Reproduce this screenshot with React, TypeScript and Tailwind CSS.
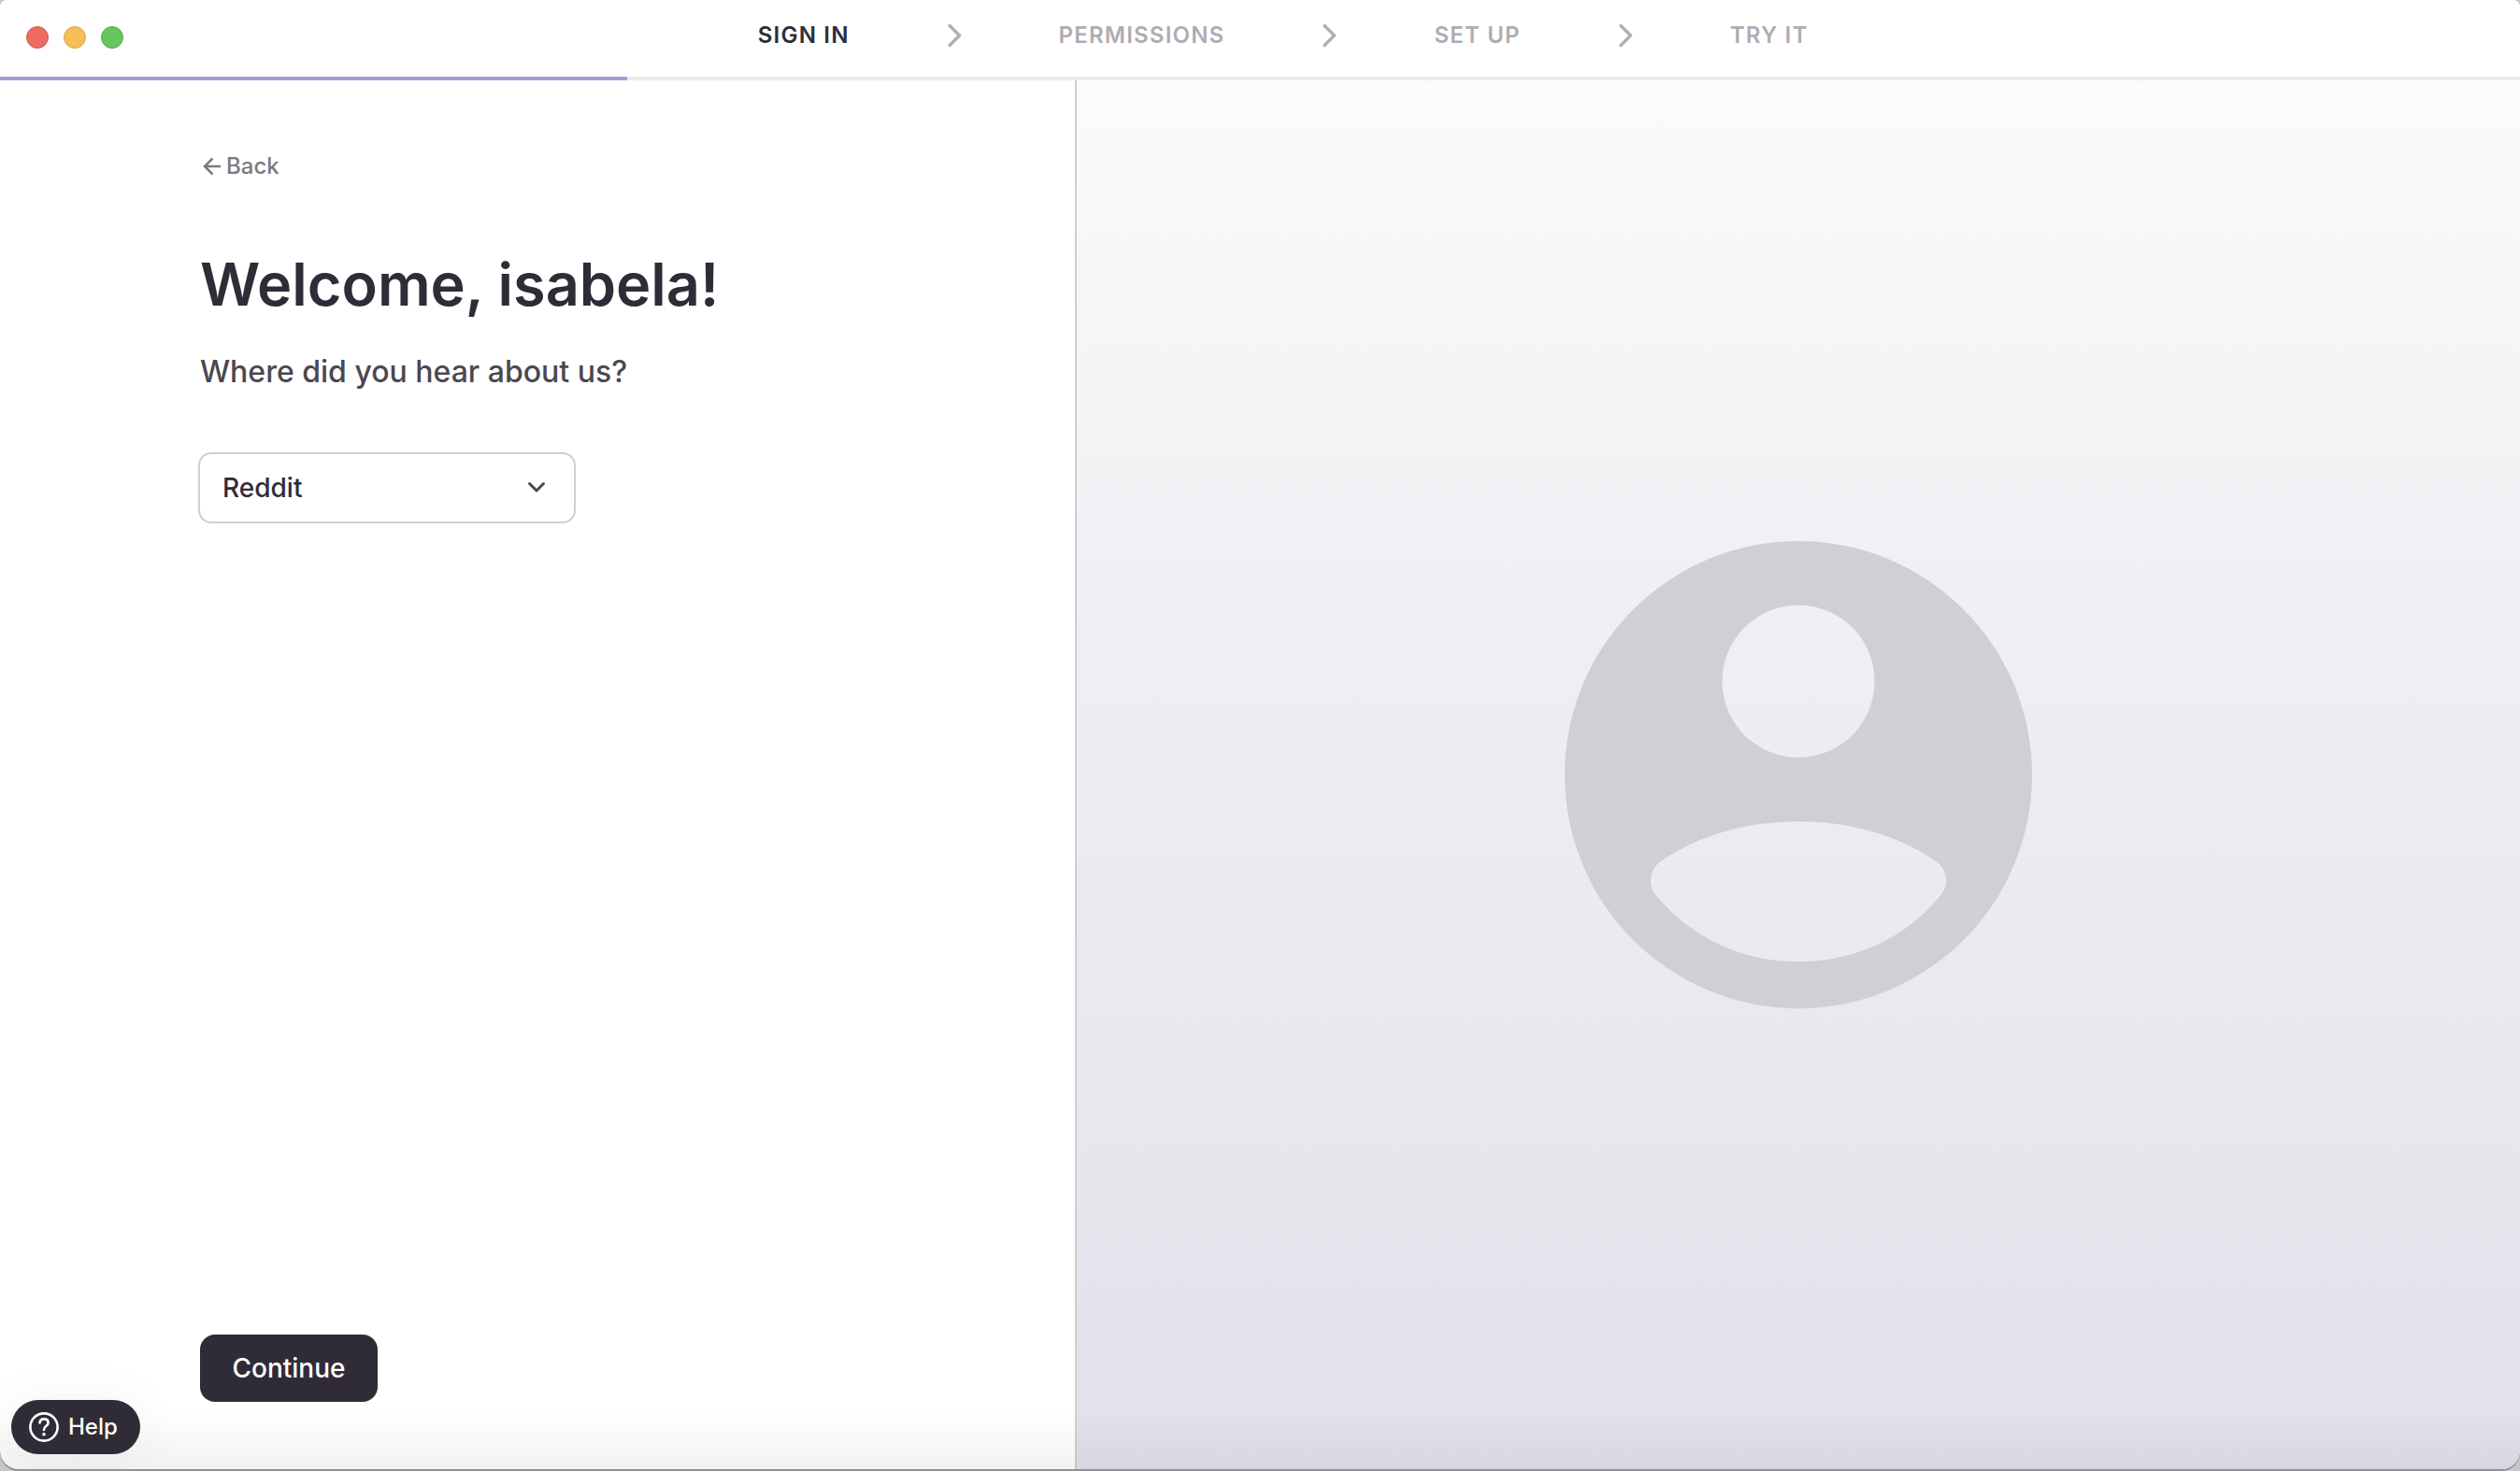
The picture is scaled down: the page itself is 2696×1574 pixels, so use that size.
import { Fragment, useState } from "react";

const steps = ["Sign in", "Permissions", "Set up", "Try it"];
const sources = ["Reddit", "YouTube", "TikTok", "Google", "A friend", "Other"];

function StepChevron() {
  return (
    <svg className="h-7 w-4 shrink-0" viewBox="0 0 16 28" fill="none" stroke="#b1adb4" strokeWidth="3.400" strokeLinecap="round" strokeLinejoin="round" aria-hidden="true">
      <path d="M3 3.500L13.500 14L3 24.500" />
    </svg>
  );
}

function Header() {
  return (
    <header className="bg-white">
      <div className="grid h-[82px] grid-cols-[3fr_7fr]">
        <div className="flex h-20 items-center gap-4 pl-7">
          <button aria-label="Close" className="size-6 rounded-full border border-[#d5584e] bg-[#ed6b60]" />
          <button aria-label="Minimize" className="size-6 rounded-full border border-[#dba646] bg-[#f4be58]" />
          <button aria-label="Zoom" className="size-6 rounded-full border border-[#54ac46] bg-[#66c55c]" />
        </div>
        <nav aria-label="Setup steps" className="flex h-[76px] items-center gap-[104px] pl-0.5 text-2xl font-semibold tracking-wider text-[#b1abb4] uppercase">
          {steps.map((step, i) => (
            <Fragment key={step}>
              {i > 0 && <StepChevron />}
              <span className={i === 0 ? "text-[#302c37]" : ""}>{step}</span>
            </Fragment>
          ))}
        </nav>
      </div>
      <div className="h-1 bg-[#ebe9ec]">
        <div className="h-1 w-[24.9%] bg-[#a79dd4]" />
      </div>
    </header>
  );
}

function SourceForm() {
  const [source, setSource] = useState("Reddit");
  return (
    <main className="flex flex-col items-start border-r-2 border-[#cfcdd4] pt-[76px] pb-[72px] pl-[212px]">
      <button className="flex items-center gap-1 pl-1 text-2xl leading-8 font-medium text-[#7c7a80]">
        <svg className="size-[22px]" viewBox="0 0 22 22" fill="none" stroke="currentColor" strokeWidth="2.500" aria-hidden="true">
          <path d="M20 11H4M11.500 2.500L3 11L11.500 19.500" />
        </svg>
        Back
      </button>
      <h1 className="mt-[70px] ml-0.5 text-[63px] leading-[80px] font-semibold text-[#302c37]">Welcome, isabela!</h1>
      <label htmlFor="source" className="mt-[34px] ml-0.5 text-[32px] leading-10 font-medium text-[#4a484f]">
        Where did you hear about us?
      </label>
      <div className="relative mt-[66px] w-[404px]">
        <select
          id="source"
          value={source}
          onChange={(e) => setSource(e.target.value)}
          className="h-[76px] w-full appearance-none rounded-[14px] border-2 border-[#cfcdd5] bg-white px-6 text-[28px] font-medium text-[#302c37]"
        >
          {sources.map((s) => (
            <option key={s}>{s}</option>
          ))}
        </select>
        <svg className="pointer-events-none absolute top-[30px] right-8 h-3.5 w-5" viewBox="0 0 20 14" fill="none" stroke="#4a484f" strokeWidth="3" strokeLinecap="round" strokeLinejoin="round" aria-hidden="true">
          <path d="M2.500 3.500L10 11L17.500 3.500" />
        </svg>
      </div>
      <button className="mt-auto ml-0.5 h-[72px] w-[190px] rounded-2xl bg-[#302c37] text-[28px] font-medium text-white">Continue</button>
    </main>
  );
}

function AvatarPanel() {
  return (
    <aside className="flex items-center justify-center bg-[linear-gradient(180deg,#fafbfd_0%,#f3f3f5_27%,#f1f0f5_33%,#eeecf1_50%,#e8e7ec_75%,#e7e4ec_81%,#e5e2ed_90%,#e4e1ec_100%)]">
      <svg className="size-[500px]" viewBox="0 0 500 500" aria-label="Profile" role="img">
        <path
          fill="#d1ced5"
          fillRule="evenodd"
          d="M250 0A250 250 0 1 1 250 500A250 250 0 1 1 250 0ZM250 68.500A81.500 81.500 0 1 0 250 231.500A81.500 81.500 0 1 0 250 68.500ZM250 300C196 300 143 314 101 344C95 349 92 356 92 364C92 369 94 374 97 378C134 424 189 450 250 450C311 450 366 424 403 378C406 374 408 369 408 364C408 356 405 349 399 344C357 314 304 300 250 300Z"
        />
      </svg>
    </aside>
  );
}

export default function App() {
  return (
    <div className="min-h-screen bg-[#c6c5c8] font-['Inter',sans-serif]">
      <div className="relative grid min-h-screen grid-rows-[auto_1fr_2px] overflow-hidden rounded-t-[6px] rounded-b-[20px] bg-[#929094]">
        <Header />
        <div className="relative grid grid-cols-[576fr_772fr] overflow-hidden rounded-b-[20px] bg-white">
          <SourceForm />
          <AvatarPanel />
          <div className="pointer-events-none absolute inset-x-0 bottom-0 h-16 bg-linear-to-t from-black/5 to-transparent" />
          <button className="absolute bottom-4 left-3 flex h-[58px] w-[138px] items-center gap-2.5 rounded-full bg-[#302c37] pl-[19px] text-2xl font-medium text-white shadow-[0_4px_60px_rgba(0,0,0,0.06)]">
            <svg className="size-8 shrink-0" viewBox="0 0 32 32" fill="none" stroke="currentColor" strokeWidth="2.600" strokeLinecap="round" aria-hidden="true">
              <circle cx="16" cy="16" r="14.600" />
              <path d="M11.500 11.500C11.800 8.800 13.600 7.400 16 7.400C18.700 7.400 20.600 9 20.600 11.400C20.600 14.800 16 15 16 19" />
              <circle cx="16" cy="23.800" r="1.800" fill="currentColor" stroke="none" />
            </svg>
            Help
          </button>
        </div>
      </div>
    </div>
  );
}
